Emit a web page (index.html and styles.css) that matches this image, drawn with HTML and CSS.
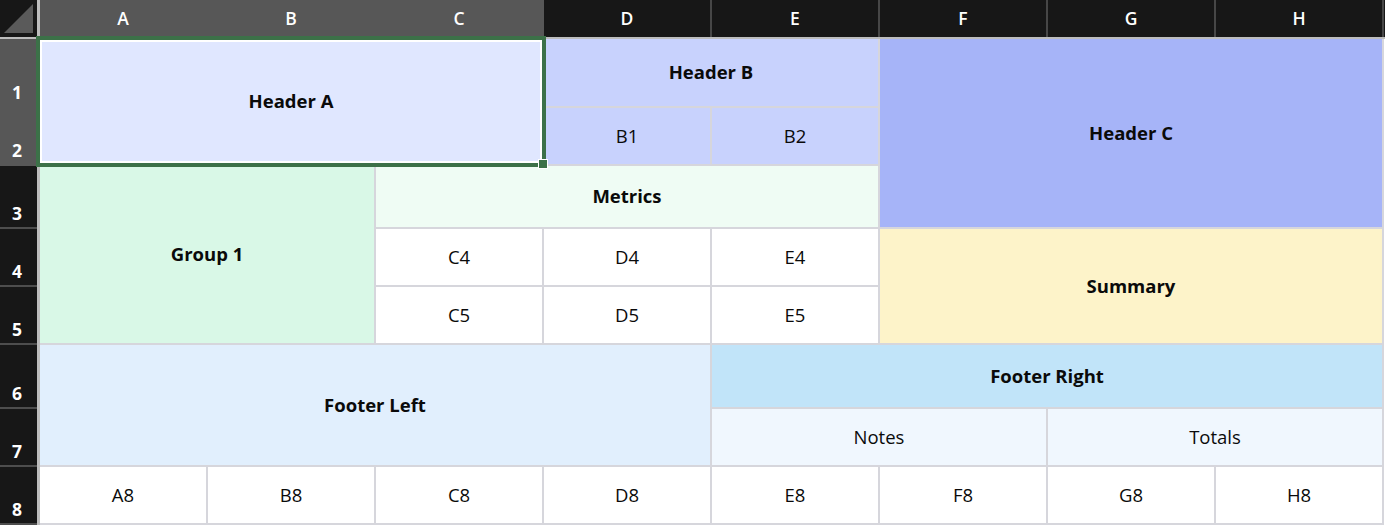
FILE: index.html
```html
<!DOCTYPE html>
<html>
<head>
<meta charset="utf-8">
<link rel="stylesheet" href="styles.css">
</head>
<body>
<div class="sheet">
  <div class="col-heads">
    <div class="corner">
      <svg width="37" height="37" viewBox="0 0 37 37"><polygon points="4,33 33,4 33,33" fill="#5a5a5a"/></svg>
    </div>
    <div class="ch sel">A</div>
    <div class="ch sel">B</div>
    <div class="ch sel">C</div>
    <div class="ch">D</div>
    <div class="ch">E</div>
    <div class="ch">F</div>
    <div class="ch">G</div>
    <div class="ch">H</div>
  </div>
  <div class="body">
    <div class="row-heads">
      <div class="rh sel r1">1</div>
      <div class="rh sel r2">2</div>
      <div class="rh r3">3</div>
      <div class="rh r4">4</div>
      <div class="rh r5">5</div>
      <div class="rh r6">6</div>
      <div class="rh r7">7</div>
      <div class="rh r8">8</div>
    </div>
    <div class="grid">
      <div class="cell b hdr-a">Header A</div>
      <div class="cell b hdr-b">Header B</div>
      <div class="cell b hdr-c">Header C</div>
      <div class="cell sub-b b1">B1</div>
      <div class="cell sub-b b2">B2</div>
      <div class="cell b group1">Group 1</div>
      <div class="cell b metrics">Metrics</div>
      <div class="cell c4">C4</div>
      <div class="cell d4">D4</div>
      <div class="cell e4">E4</div>
      <div class="cell b summary">Summary</div>
      <div class="cell c5">C5</div>
      <div class="cell d5">D5</div>
      <div class="cell e5">E5</div>
      <div class="cell b footer-left">Footer Left</div>
      <div class="cell b footer-right">Footer Right</div>
      <div class="cell sub-f notes">Notes</div>
      <div class="cell sub-f totals">Totals</div>
      <div class="cell r8c">A8</div>
      <div class="cell r8c">B8</div>
      <div class="cell r8c">C8</div>
      <div class="cell r8c">D8</div>
      <div class="cell r8c">E8</div>
      <div class="cell r8c">F8</div>
      <div class="cell r8c">G8</div>
      <div class="cell r8c">H8</div>
      <div class="selection"></div>
      <div class="handle"></div>
    </div>
  </div>
</div>
</body>
</html>
```
FILE: styles.css
```css
* { box-sizing: border-box; }
html, body { margin: 0; padding: 0; background: #ffffff; }
body { font-family: "Open Sans", "Liberation Sans", sans-serif; }

.sheet { width: 1385px; }

.col-heads {
  display: flex;
  height: 39px;
  background: #171717;
  border-bottom: 2px solid #bdbdbd;
}
.corner {
  width: 40px;
  border-right: 3px solid #bdbdbd;
  background: #171717;
  display: flex;
}
.ch {
  width: 168px;
  border-right: 2px solid #474747;
  color: #ffffff;
  font-weight: 600;
  font-size: 17.5px;
  display: flex;
  align-items: center;
  justify-content: center;
  padding-bottom: 2px;
}
.ch.sel { background: #575757; border-right-color: #575757; }

.body { display: flex; }

.row-heads {
  width: 40px;
  border-right: 3px solid #bdbdbd;
  background: #171717;
  display: flex;
  flex-direction: column;
}
.rh {
  color: #ffffff;
  font-weight: 700;
  font-size: 17.5px;
  display: flex;
  align-items: flex-end;
  justify-content: center;
  padding: 0 3px 2px 0;
  border-bottom: 2px solid #4d4d4d;
}
.rh.sel { background: #575757; border-bottom-color: #575757; }
.r1 { height: 69px; }
.r2 { height: 58px; }
.r3 { height: 63px; }
.r4 { height: 58px; }
.r5 { height: 58px; }
.r6 { height: 64px; }
.r7 { height: 58px; }
.r8 { height: 58px; }

.grid {
  position: relative;
  display: grid;
  grid-template-columns: repeat(8, 166px);
  grid-template-rows: 67px 56px 61px 56px 56px 62px 56px 56px;
  gap: 2px;
  padding: 0 2px 2px 0;
  background: #d6d6dc;
}
.cell {
  display: flex;
  align-items: center;
  justify-content: center;
  background: #ffffff;
  color: #0a0a0a;
  font-size: 18.5px;
  padding-bottom: 2px;
}
.b { font-weight: 700; }

.hdr-a { grid-column: 1 / 4; grid-row: 1 / 3; background: #e0e7ff; }
.hdr-b { grid-column: 4 / 6; grid-row: 1; background: #c8d2fd; }
.hdr-c { grid-column: 6 / 9; grid-row: 1 / 4; background: #a6b4f8; }
.sub-b { background: #c8d2fd; }
.b1 { grid-column: 4; grid-row: 2; }
.b2 { grid-column: 5; grid-row: 2; }
.group1 { grid-column: 1 / 3; grid-row: 3 / 6; background: #d9f8e7; }
.metrics { grid-column: 3 / 6; grid-row: 3; background: #effcf4; }
.c4 { grid-column: 3; grid-row: 4; }
.d4 { grid-column: 4; grid-row: 4; }
.e4 { grid-column: 5; grid-row: 4; }
.summary { grid-column: 6 / 9; grid-row: 4 / 6; background: #fdf3c9; }
.c5 { grid-column: 3; grid-row: 5; }
.d5 { grid-column: 4; grid-row: 5; }
.e5 { grid-column: 5; grid-row: 5; }
.footer-left { grid-column: 1 / 5; grid-row: 6 / 8; background: #e1effd; }
.footer-right { grid-column: 5 / 9; grid-row: 6; background: #c1e4f9; }
.sub-f { background: #f0f7fe; }
.notes { grid-column: 5 / 7; grid-row: 7; }
.totals { grid-column: 7 / 9; grid-row: 7; }
.r8c { grid-row: 8; }

.selection {
  position: absolute;
  left: -4px;
  top: -3px;
  width: 510px;
  height: 131px;
  border: 4px solid #3c7148;
  box-shadow: inset 0 0 0 2px #ffffff;
  pointer-events: none;
}
.handle {
  position: absolute;
  left: 498px;
  top: 120px;
  width: 10px;
  height: 10px;
  background: #3c7148;
  border: 1px solid #ffffff;
}
```
